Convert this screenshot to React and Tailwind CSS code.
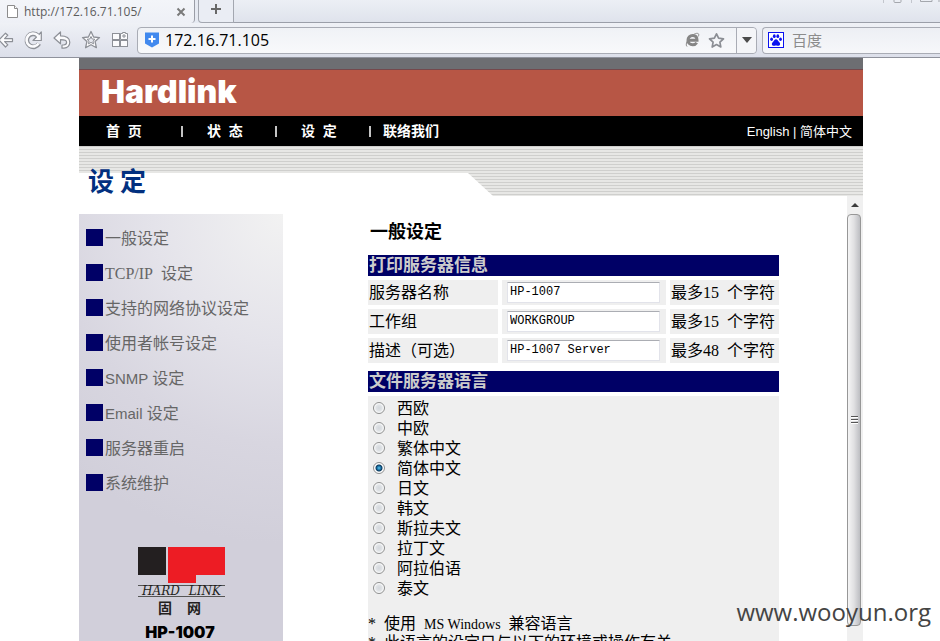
import React from "react";

const songti = "font-['Liberation_Serif','Noto_Sans_CJK_SC',serif]";
const arial = "font-['Liberation_Sans','Noto_Sans_CJK_SC',sans-serif]";
const humanist = "font-['Open_Sans','Noto_Sans_CJK_SC',sans-serif]";

const topNav = [
  { label: "首\u00a0\u00a0页", pad: "pl-[19px]" },
  { label: "状\u00a0\u00a0态", pad: "pl-[26px]" },
  { label: "设\u00a0\u00a0定", pad: "pl-[26px]" },
  { label: "联络我们", pad: "pl-[14px]" },
];

const sideNav = [
  { text: "一般设定" },
  { latin: "TCP/IP\u00a0", text: "设定", serif: true },
  { text: "支持的网络协议设定" },
  { text: "使用者帐号设定" },
  { latin: "SNMP", text: "设定" },
  { latin: "Email", text: "设定" },
  { text: "服务器重启" },
  { text: "系统维护" },
];

const fields = [
  { id: "server-name", label: "服务器名称", value: "HP-1007", max: "15" },
  { id: "workgroup", label: "工作组", value: "WORKGROUP", max: "15" },
  { id: "description", label: "描述（可选）", value: "HP-1007 Server", max: "48" },
];

const languages = [
  "西欧", "中欧", "繁体中文", "简体中文", "日文",
  "韩文", "斯拉夫文", "拉丁文", "阿拉伯语", "泰文",
];

function BackIcon() {
  return (
    <svg width="20" height="20" viewBox="0 0 20 20">
      <path
        d="M5 10L11.5 3.2L13.8 5.2L10.600 8.600H18.500V11.600H10.600L13.800 14.900L11.500 17Z"
        fill="#fbfbfd" stroke="#8d9097" strokeWidth="1.2" strokeLinejoin="round"
      />
    </svg>
  );
}

function RefreshIcon() {
  return (
    <svg width="20" height="20" viewBox="0 0 20 20" fill="none">
      <path d="M16 13.600A6.500 6.500 0 1 1 14.500 5.300" stroke="#8d9097" strokeWidth="4.600" />
      <path d="M18.300 2V10.500H10L13 7.500L15.500 5Z" fill="#fbfbfd" stroke="#8d9097" strokeWidth="1.200" strokeLinejoin="round" />
      <path d="M15.600 13.400A6.500 6.500 0 1 1 14.500 5.300L15.500 7.500" stroke="#fbfbfd" strokeWidth="2.600" />
    </svg>
  );
}

function UndoIcon() {
  return (
    <svg width="20" height="20" viewBox="0 0 20 20">
      <path
        d="M2 8L8.500 2V5.800C14.500 5.800 17.800 8.300 17.800 12.300C17.800 15.500 15.500 18 12 18.200H10V15H11.500C13.500 14.900 14.600 13.800 14.600 12.200C14.600 10.200 13 9.700 8.500 9.700V13.800Z"
        fill="#fbfbfd" stroke="#8d9097" strokeWidth="1.200" strokeLinejoin="round"
      />
    </svg>
  );
}

function StarIcon() {
  return (
    <svg width="20" height="20" viewBox="0 0 20 20" strokeLinejoin="round">
      <path d="M10 1.500L12.600 7L18.500 7.600L14.100 11.600L15.400 17.700L10 14.700L4.600 17.700L5.900 11.600L1.500 7.600L7.400 7Z" fill="#fbfbfd" stroke="#8d9097" strokeWidth="1.300" />
      <path d="M10 6.500L11.200 9L14 9.300L12 11.100L12.500 13.800L10 12.400L7.500 13.800L8 11.100L6 9.300L8.800 9Z" fill="#e6e8ef" stroke="#8d9097" />
    </svg>
  );
}

function AppsIcon() {
  return (
    <svg width="20" height="20" viewBox="0 0 20 20" fill="#fbfbfd" stroke="#8d9097">
      <rect x="2.500" y="3.500" width="7" height="6" />
      <rect x="2.500" y="10.500" width="7" height="6" />
      <rect x="10.500" y="10.500" width="7" height="6" />
      <path d="M10.500 9.500V3.500H12.500V2.500H15.500V3.500H17.500V9.500Z" />
      <path d="M14 4V8M12 6H16" />
    </svg>
  );
}

function ToolButton({ label, children }) {
  return (
    <button type="button" aria-label={label} className="flex size-[29px] shrink-0 items-center justify-center">
      {children}
    </button>
  );
}

function Browser() {
  return (
    <header className={`shrink-0 bg-[#e6eaf2] ${humanist}`}>
      <div className="flex h-[23px]">
        <div className="flex w-[195px] items-center rounded-br-sm border-r border-[#9a9da6] bg-linear-to-b from-[#f3f5f9] to-[#eef0f6] pl-[7px] pr-2">
          <svg width="12" height="14" viewBox="0 0 12 14" fill="#fff" stroke="#8c8c8c" className="shrink-0">
            <path d="M.5 .5H7.500L10.500 3.500V12.500H.5Z" />
            <path d="M7.500 .5V3.500H10.500" />
          </svg>
          <button type="button" className="ml-[5px] grow text-left text-[12px] leading-[20px] text-[#5c5c5c]">
            http://172.16.71.105/
          </button>
          <button type="button" aria-label="关闭">
            <svg width="10" height="10" viewBox="0 0 10 10" stroke="#7a7a7a" strokeWidth="2">
              <path d="M1.500 1.500L8.500 8.500M8.500 1.500L1.500 8.500" />
            </svg>
          </button>
        </div>
        <button type="button" aria-label="新标签" className="ml-[3px] flex w-9 items-center justify-center rounded-bl-sm border-b border-l border-r border-[#a3a7b0] bg-[#eaedf4]">
          <svg width="12" height="12" viewBox="0 0 12 12" stroke="#686868" strokeWidth="2" className="mb-1">
            <path d="M6 1V11M1 6H11" />
          </svg>
        </button>
        <div className="flex grow justify-end border-b border-[#9b9fa9] bg-linear-to-b from-[#eceff5] to-[#dfe3ec]">
          <svg width="58" height="4" viewBox="0 0 58 4" fill="none" stroke="#a4a7ad">
            <path d="M1.500 0V3M29.500 0V3" stroke="#c3c6cd" />
            <path d="M12 0V1.500Q12 2.500 13 2.500H18Q19 2.500 19 1.500V0M38.500 0V1.500H50V0M57 0V2" />
          </svg>
        </div>
      </div>
      <div className="flex h-[35px] items-center border-b border-[#8f929c] bg-linear-to-b from-[#eff1f6] to-[#dcdfea]">
        <div className="-ml-[11px] mr-[3px] flex">
          <ToolButton label="后退"><BackIcon /></ToolButton>
          <ToolButton label="刷新"><RefreshIcon /></ToolButton>
          <ToolButton label="撤销"><UndoIcon /></ToolButton>
          <ToolButton label="收藏"><StarIcon /></ToolButton>
          <ToolButton label="应用"><AppsIcon /></ToolButton>
        </div>
        <div className="flex h-[27px] grow items-center rounded border border-[#a9acb5] bg-linear-to-b from-[#f0f2f6] to-[#f8f9fb]">
          <svg width="14" height="16" viewBox="0 0 14 16" className="ml-[7px] shrink-0">
            <path d="M0 .5H14V11.500L7 15.500L0 11.500Z" fill="#4189ee" />
            <path d="M7 3.500V10.500M3.500 7H10.500" stroke="#fff" strokeWidth="2" />
          </svg>
          <input aria-label="地址" defaultValue="172.16.71.105" className="ml-1.5 min-w-0 grow bg-transparent text-[16px] leading-6 text-black outline-none" />
          <svg width="15" height="16" viewBox="0 0 15 16" fill="none" className="shrink-0">
            <path d="M3 8.200H12C12 5.300 10.300 3.500 7.700 3.500C5 3.500 3 5.500 3 8.200C3 11 5 12.700 7.700 12.700C9.500 12.700 10.900 12 11.700 10.700" stroke="#858585" strokeWidth="3" />
            <path d="M2 14.500C.5 13 1.500 9.500 4 6.500C7 3 11.500 .3 13.300 1.700C14 2.400 13.800 3.500 13.200 4.500" stroke="#8b8b8b" />
          </svg>
          <svg width="17" height="17" viewBox="0 0 17 17" fill="none" className="ml-2 mr-[11px] shrink-0">
            <path d="M8.500 1.800L10.600 6.200L15.500 6.800L11.900 10.100L12.800 15L8.500 12.600L4.200 15L5.100 10.100L1.500 6.800L6.400 6.200Z" stroke="#8b8e94" strokeWidth="1.700" strokeLinejoin="round" />
          </svg>
          <button type="button" aria-label="历史" className="flex h-full w-5 shrink-0 items-center justify-center rounded-r border-l border-[#a9acb5] bg-[#f4f5f8]">
            <svg width="10" height="6" viewBox="0 0 10 6" fill="#4b4b4b"><path d="M0 0H10L5 6Z" /></svg>
          </button>
        </div>
        <div className="ml-[5px] flex h-[27px] w-[178px] items-center rounded-l border border-r-0 border-[#a9acb5] bg-linear-to-b from-[#edeff4] to-[#f6f7fa]">
          <svg width="16" height="16" viewBox="0 0 16 16" className="ml-[5px] shrink-0" fill="#0b12f0">
            <rect x=".5" y=".5" width="15" height="15" fill="#fff" stroke="#0b12f0" />
            <ellipse cx="3.600" cy="7.200" rx="1.400" ry="1.800" />
            <ellipse cx="6.300" cy="4.200" rx="1.400" ry="1.900" />
            <ellipse cx="9.800" cy="4.200" rx="1.400" ry="1.900" />
            <ellipse cx="12.500" cy="7.200" rx="1.400" ry="1.800" />
            <path d="M8 7.200C9.500 7.200 10 9 11.300 10.200C12.800 11.600 12.200 13.800 10.200 13.800C9 13.800 9 13.500 8 13.500C7 13.500 7 13.800 5.800 13.800C3.800 13.800 3.200 11.600 4.700 10.200C6 9 6.500 7.200 8 7.200Z" />
          </svg>
          <input aria-label="搜索" placeholder="百度" className="ml-2 min-w-0 grow bg-transparent text-[15px] leading-6 outline-none placeholder:text-[#8c8c8c]" />
        </div>
      </div>
    </header>
  );
}

function Banner() {
  return (
    <div className="shrink-0">
      <div className="h-3 border-b border-[#74484c] bg-[#6d6e72]" />
      <div className="h-[46px] bg-[#b75645] pl-[22px] pt-px">
        <p className="font-['Inter',sans-serif] text-[32px] font-black leading-[42px] text-white">Hardlink</p>
      </div>
      <nav className={`flex h-[30px] items-center bg-black pl-2 text-white ${arial}`}>
        {topNav.map((item, i) => (
          <div key={item.label} className="flex w-[94px] items-center">
            <span className={i ? "-mr-0.5 h-[11px] w-0.5 bg-[#c4c4c4]" : ""} />
            <a href="#" className={`whitespace-nowrap text-[14px] font-bold leading-5 ${item.pad}`}>{item.label}</a>
          </div>
        ))}
        <p className="ml-auto pr-[11px] pt-px text-[13px] leading-5">
          <a href="#">English</a> | <a href="#">简体中文</a>
        </p>
      </nav>
      <div className="grid h-[50px] bg-[repeating-linear-gradient(to_bottom,#cfcfcd_0px,#cfcfcd_1px,#e7e7e5_1px,#e7e7e5_3px)]">
        <div className="col-start-1 row-start-1 mt-[27px] w-[414px] bg-white [clip-path:polygon(0_0,389px_0,414px_100%,0_100%)]" />
        <h1 className="z-10 col-start-1 row-start-1 pl-[9px] pt-[18px] font-['Noto_Sans_CJK_SC',sans-serif] text-[26px] font-bold leading-8 text-[#02307f]">
          设 定
        </h1>
      </div>
    </div>
  );
}

function Sidebar() {
  return (
    <aside className={`mt-[18px] w-[204px] shrink-0 bg-[radial-gradient(circle_at_100%_0%,#f2f2f2_0px,#e4e3ea_130px,#d8d6e0_230px,#d1cfda_330px)] pt-1.5 ${arial}`}>
      <ul>
        {sideNav.map((item) => (
          <li key={(item.latin || "") + item.text} className="flex h-[35px] items-center pl-[7px]">
            <span className="mr-0.5 size-[17px] bg-[#000066]" />
            <a href="#" className="pt-0.5 text-[16px] leading-6 text-[#666]">
              {item.latin && (
                <span className={item.serif ? "font-['Liberation_Serif',serif] text-[16px]" : "text-[15px]"}>
                  {item.latin}{" "}
                </span>
              )}
              {item.text}
            </a>
          </li>
        ))}
      </ul>
      <div className="ml-[59px] mt-[47px] w-[87px]">
        <svg width="87" height="36" viewBox="0 0 87 36">
          <path d="M0 0H28V28H0Z" fill="#231f20" />
          <path d="M30 0H87V28H58V36H30Z" fill="#ed1c24" />
        </svg>
        <p className="mt-0.5 flex h-3 items-center justify-between border-y border-[#555] px-1 font-['DejaVu_Serif',serif] text-[12px] italic leading-3 text-[#231f20]">
          <span>HARD</span>
          <span>LINK</span>
        </p>
        <p className="mt-[3px] flex justify-center gap-[15px] pr-1 text-[14px] font-bold leading-4 text-[#231f20]">
          <span>固</span>
          <span>网</span>
        </p>
        <p className="mt-2 pr-[3px] text-center font-['Inter',sans-serif] text-[16px] font-black leading-4 text-black">HP-1007</p>
      </div>
    </aside>
  );
}

function BandTitle({ children }) {
  return <span className="block h-[21px] overflow-visible pl-px text-left text-[17px] font-bold leading-[21px] text-[#ccc]">{children}</span>;
}

function SettingsForm() {
  return (
    <form className={`min-w-0 grow overflow-hidden pl-[81px] text-[16px] text-black ${songti}`}>
      <h2 className="pl-1.5 pt-[25px] text-[18px] font-bold leading-[22px]">一般设定</h2>
      <table className="mt-2 w-[419px] table-fixed border-separate border-spacing-1">
        <colgroup>
          <col className="w-[130px]" />
          <col className="w-[164px]" />
          <col />
        </colgroup>
        <thead>
          <tr>
            <th colSpan="3" className="bg-[#000066] p-0"><BandTitle>打印服务器信息</BandTitle></th>
          </tr>
        </thead>
        <tbody>
          {fields.map((f) => (
            <tr key={f.id} className="leading-[25px]">
              <td className="h-[25px] bg-[#efefef] py-0 pl-px pr-0"><label htmlFor={f.id}>{f.label}</label></td>
              <td className="h-[25px] bg-[#efefef] py-0 pl-[5px] pr-0">
                <input
                  id={f.id}
                  defaultValue={f.value}
                  className="block h-[21px] w-[153px] border border-[#e2e3ea] border-t-[#abadb3] bg-white px-0.5 font-['Liberation_Mono',monospace] text-[12px] outline-none"
                />
              </td>
              <td className="h-[25px] whitespace-nowrap bg-[#efefef] py-0 pl-px pr-0">最多{f.max}&nbsp; 个字符</td>
            </tr>
          ))}
        </tbody>
      </table>
      <div className="w-[419px] p-1">
        <div className="bg-[#000066]"><BandTitle>文件服务器语言</BandTitle></div>
        <fieldset aria-label="文件服务器语言" className="mt-1 bg-[#efefef] pb-10 pt-0.5">
          {languages.map((name) => (
            <label key={name} className="flex h-5 items-center pl-[5px] leading-5">
              <input
                type="radio"
                name="language"
                defaultChecked={name === "简体中文"}
                className="mr-3 size-3 appearance-none rounded-full border border-[#8e8f8f] bg-[radial-gradient(circle,#d3d7dc_0px,#e0e3e6_3px,#fff_5px)] checked:bg-[radial-gradient(circle,#5cc8f0_0px,#156a9f_2px,#0f3a5c_3px,#fff_4px)]"
              />
              <span className="pt-0.5">{name}</span>
            </label>
          ))}
          <div className="whitespace-nowrap pt-[17px] leading-[18px]">
            <p>*&nbsp; 使用&nbsp; <span className="text-[14px]">MS Windows</span>&nbsp; 兼容语言</p>
            <p>*&nbsp; 此语言的设定只与以下的环境或操作有关</p>
          </div>
        </fieldset>
      </div>
    </form>
  );
}

function Scrollbar() {
  return (
    <div aria-hidden="true" className="flex w-4 shrink-0 flex-col bg-[#f0f0f0] pr-0.5">
      <svg width="14" height="18" viewBox="0 0 14 18" fill="#3c3c3c"><path d="M4 11L8 7L12 11Z" /></svg>
      <div className="mb-[15px] flex grow flex-col items-center justify-center gap-px rounded-sm border border-[#979797] bg-linear-to-r from-[#f5f5f5] via-[#e0e0e2] to-[#bdbec2]">
        <span className="h-0.5 w-[7px] border-b border-white bg-[#555]" />
        <span className="h-0.5 w-[7px] border-b border-white bg-[#555]" />
        <span className="h-0.5 w-[7px] border-b border-white bg-[#555]" />
      </div>
    </div>
  );
}

export default function App() {
  return (
    <div className="relative flex h-screen flex-col overflow-hidden bg-white">
      <Browser />
      <div className="flex min-h-0 grow flex-col pl-0.5">
        <div className="mx-auto flex min-h-0 w-full max-w-[784px] grow flex-col">
          <Banner />
          <div className="flex min-h-0 grow overflow-hidden">
            <Sidebar />
            <SettingsForm />
            <Scrollbar />
          </div>
        </div>
      </div>
      <p className={`absolute bottom-3 right-[9px] text-[24px] leading-[34px] text-[#444] ${humanist}`}>www.wooyun.org</p>
    </div>
  );
}
